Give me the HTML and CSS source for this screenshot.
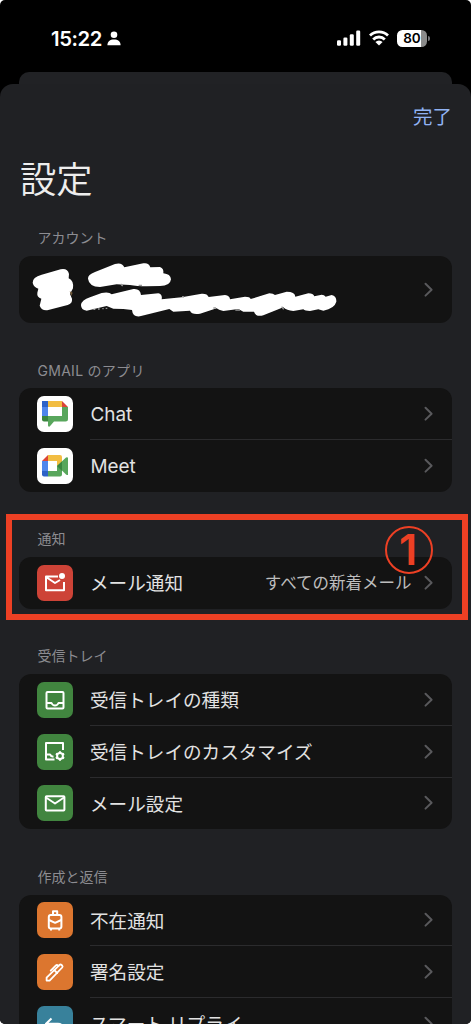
FILE: index.html
```html
<!DOCTYPE html>
<html lang="ja">
<head>
<meta charset="utf-8">
<title>設定</title>
<link rel="stylesheet" href="styles.css">
</head>
<body>
<svg class="defs" aria-hidden="true">
  <symbol id="chev" viewBox="0 0 10 16"><path d="M1.500 1.800 7.600 7.700 1.500 13.600" fill="none" stroke="#59595c" stroke-width="2" stroke-linecap="round" stroke-linejoin="round"/></symbol>
</svg>
<div class="phone">
  <header class="status">
    <span class="clock">15:22</span>
    <svg class="person" viewBox="0 0 14 15"><circle cx="7" cy="3.800" r="3.300"/><path d="M.4 14.300C.4 10.600 3 8.600 7 8.600s6.600 2 6.600 5.700z"/></svg>
    <svg class="signal" viewBox="0 0 24 16"><rect x="0" y="10.200" width="4" height="5.500" rx="1.200"/><rect x="6.400" y="7.500" width="4" height="8.200" rx="1.200"/><rect x="12.800" y="4.200" width="4" height="11.500" rx="1.200"/><rect x="19.200" y=".5" width="4" height="15.200" rx="1.200"/></svg>
    <svg class="wifi" viewBox="0 0 20 16"><g fill="none" stroke="#fff" stroke-width="2.800"><path d="M1 5.400a13 13 0 0 1 18 0"/><path d="M4.200 9.400a8.200 8.200 0 0 1 11.600 0"/></g><path d="M10 15.400 6.400 12a5 5 0 0 1 7.200 0z"/></svg>
    <div class="battery"><span>80</span></div>
  </header>
  <div class="back-sheet"></div>
  <main class="sheet">
    <div class="done">完了</div>
    <h1>設定</h1>

    <section>
      <h2>アカウント</h2>
      <div class="card">
        <div class="account">
          <svg class="redacted" viewBox="19 256 330 67"><g transform="translate(0 140) scale(.33333)">
            <path d="M98 428Q97 412 125 404L182 388Q203 384 207 402L206 415Q222 422 219 445L210 462L216 476Q218 490 203 495L145 510Q126 514 119 497L124 476Q110 472 112 458L115 446Q101 442 98 428Z"/>
            <path d="M264 416Q263 404 285 396L345 372Q366 366 373 382L430 370Q446 367 451 382L480 381Q492 385 490 400Q512 402 513 418Q511 438 480 438L440 439Q410 439 390 435L350 433L300 441Q267 440 264 416Z"/>
            <path d="M243 495Q245 480 270 472L305 459Q328 455 335 463L400 447Q421 445 423 465L475 460Q488 463 485 478L545 472L605 461Q622 460 626 471L675 465Q690 467 690 478L735 470Q750 470 752 477L808 460Q820 460 825 465L860 455Q885 455 886 470L925 460Q940 460 943 469L965 464Q973 464 977 470L995 465Q1010 468 1009 485Q1004 505 970 512L955 508L930 513Q915 513 910 508L880 513Q860 512 850 502L790 526Q768 532 762 515L730 515L715 507L670 513Q655 510 650 505L600 521Q575 525 570 512L520 515L508 507L420 529Q398 532 396 510L370 507L340 506L320 498L260 512Q243 510 243 495Z"/>
            <path class="trace" d="M280 508h6m8-1h5m8-1h4m6-1h5M362 432l6 6m48-2h10M546 470l6 1M640 504h8M706 510h14M845 500l6 8"/>
            <path d="M209 454l9 4-4 10z" fill="#755c3a"/>
          </g></svg>
          <svg class="chev"><use href="#chev"/></svg>
        </div>
      </div>
    </section>

    <section>
      <h2 class="spaced">GMAIL のアプリ</h2>
      <div class="card">
        <div class="row">
          <svg class="icon white" viewBox="0 0 36 36"><path fill="#4f86ec" d="M5 5h6v16H5z"/><path fill="#2d62c8" d="M5 5h6v6H5z"/><path fill="#f2bd42" d="M11 5h14v6H11z"/><path fill="#db4437" d="M25 5l6 6h-6z"/><path fill="#58a65c" d="M25 11h6v12q0 2.500-2.500 2.500H17l-4.300 5q-1.700.5-1.700-1V20h14z"/><path fill="#3b8540" d="M5 20h6v5.500H7q-2 0-2-2z"/></svg>
          <div class="line"><span class="latin">Chat</span><svg class="chev"><use href="#chev"/></svg></div>
        </div>
        <div class="row">
          <svg class="icon white" viewBox="0 0 36 36"><path fill="#db4437" d="M5 13l6-6v6z"/><path fill="#4f86ec" d="M5 13h6v10H5z"/><path fill="#2d62c8" d="M5 23h6v5.500H7q-2 0-2-2z"/><path fill="#f2bd42" d="M11 7h12q2 0 2 2v9h-5v-5h-9z"/><path fill="#58a65c" d="M11 23h9v-5l9-8.500q2-1 2 1v16q0 1-2 0l-4-4v4q0 2-2 2H11z"/><path fill="#3b8540" d="M20 18l5-4.500v9.500z"/></svg>
          <div class="line"><span class="latin">Meet</span><svg class="chev"><use href="#chev"/></svg></div>
        </div>
      </div>
    </section>

    <section class="marked">
      <h2>通知</h2>
      <div class="card">
        <div class="row">
          <svg class="icon red" viewBox="0 0 36 36"><path d="M21 11.500H9v13.800h18V17M9 12l9 6 5-3"/><circle cx="25" cy="11" r="3" class="solid"/></svg>
          <div class="line"><span>メール通知</span><span class="value">すべての新着メール</span><svg class="chev"><use href="#chev"/></svg></div>
        </div>
      </div>
      <div class="frame"></div>
      <div class="badge">1</div>
    </section>

    <section>
      <h2>受信トレイ</h2>
      <div class="card">
        <div class="row">
          <svg class="icon green" viewBox="0 0 36 36"><rect x="9.500" y="10" width="17" height="16.500" rx="1"/><path d="M10 21h4.500q1 2.500 3.500 2.500t3.500-2.500H26"/></svg>
          <div class="line"><span>受信トレイの種類</span><svg class="chev"><use href="#chev"/></svg></div>
        </div>
        <div class="row">
          <svg class="icon green" viewBox="0 0 36 36"><path d="M26 16V9H9v16.500h8.500M9 20.500h4q1 2 3.500 2.200"/><circle cx="23" cy="22" r="2.900"/><path d="M23 17.200v2M23 24.800v2M18.900 19.600l1.600 1M25.500 23.400l1.600 1M18.900 24.400l1.600-1M25.500 20.600l1.600-1"/></svg>
          <div class="line"><span>受信トレイのカスタマイズ</span><svg class="chev"><use href="#chev"/></svg></div>
        </div>
        <div class="row">
          <svg class="icon green" viewBox="0 0 36 36"><rect x="8.800" y="11.200" width="18.600" height="14.300" rx=".8"/><path d="M9 12.500l9 6 9-6"/></svg>
          <div class="line"><span>メール設定</span><svg class="chev"><use href="#chev"/></svg></div>
        </div>
      </div>
    </section>

    <section>
      <h2>作成と返信</h2>
      <div class="card">
        <div class="row">
          <svg class="icon orange" viewBox="0 0 36 36"><rect x="11.800" y="13" width="12.600" height="13.600" rx="2"/><path d="M16 13V9.300h4.200V13M12 18l6.100 2.800 6.100-2.800M14 27v1.500M22.200 27v1.500"/></svg>
          <div class="line"><span>不在通知</span><svg class="chev"><use href="#chev"/></svg></div>
        </div>
        <div class="row">
          <svg class="icon orange" viewBox="0 0 36 36"><g stroke-width="1.800"><path d="M9.600 26.600v-3L22.600 10.800q1-.8 2 .2l.6.600q.8.900 0 1.900L12.600 26.600z"/><path d="M13.700 16.600l5.200-5.200q1-.9 2 0l.6.600M17.300 16.200l2.800 2.800" stroke-linecap="round"/></g></svg>
          <div class="line"><span>署名設定</span><svg class="chev"><use href="#chev"/></svg></div>
        </div>
        <div class="row">
          <svg class="icon teal" viewBox="0 0 36 36"><path d="M14.500 12.500 9 17.800l5.500 5.200M9 17.800h12q5 0 5 6"/></svg>
          <div class="line"><span>スマート リプライ</span><svg class="chev"><use href="#chev"/></svg></div>
        </div>
      </div>
    </section>
  </main>
</div>
</body>
</html>
```
FILE: styles.css
```css
* { box-sizing: border-box; }
body {
  margin: 0;
  background: #fff;
  overflow: hidden;
  font-family: "Noto Sans CJK JP", sans-serif;
  color: #e2e2e2;
}
.defs { display: none; }
.phone {
  height: 1024px;
  overflow: hidden;
  background: #000;
  border-radius: 5px;
}
.status {
  height: 72px;
  display: flex;
  align-items: center;
  padding: 4px 41px 0 51px;
  fill: #fff;
}
.clock {
  font: 600 20.300px/24px Inter, sans-serif;
  color: #fff;
  width: 56px;
  padding-top: 1px;
  letter-spacing: -.4px;
}
.person { width: 14px; height: 15px; }
.signal { width: 24px; height: 16px; margin-left: auto; }
.wifi { width: 20px; height: 16px; margin: 0 8px; }
.battery {
  position: relative;
  width: 30px;
  height: 17px;
  border-radius: 5.500px;
  background: linear-gradient(90deg, #fff 80%, #8b8b8b 80%);
  font: 600 13.500px/17px Inter, sans-serif;
  color: #000;
  text-align: center;
  margin-right: 3px;
}
.battery::after {
  content: "";
  position: absolute;
  left: 31px;
  top: 6px;
  width: 2px;
  height: 5px;
  border-radius: 0 2px 2px 0;
  background: #77777a;
}
.back-sheet {
  height: 24px;
  margin: 0 19px -12px;
  border-radius: 10px 10px 0 0;
  background: #212225;
}
.sheet {
  height: 940px;
  padding: 17px 19px 0;
  border-radius: 13px 13px 0 0;
  background: #202124;
  overflow: hidden;
}
.done {
  height: 30px;
  font-size: 19.500px;
  line-height: 30px;
  color: #91b3f3;
  text-align: right;
}
h1 {
  margin: 21px 0 1px 1px;
  font-size: 36.300px;
  line-height: 50px;
  font-weight: 350;
  color: #eee;
}
h2 {
  margin: 0;
  height: 65.250px;
  padding: 35.500px 0 0 18.500px;
  font: 400 14px/24px Inter, "Noto Sans CJK JP", sans-serif;
  color: #8c8c91;
}
.spaced { letter-spacing: .28px; }
section:first-of-type h2 { height: 53px; padding-top: 23px; }
.card {
  border-radius: 12px;
  background: #131313;
  overflow: hidden;
}
.account {
  height: 67px;
  display: flex;
  align-items: center;
  justify-content: space-between;
  padding-right: 18px;
}
.redacted { width: 330px; height: 67px; fill: #fff; }
.trace { fill: none; stroke: #999; stroke-width: 4; }
.chev { width: 10px; height: 16px; flex: none; }
.row {
  height: 51.750px;
  display: flex;
  align-items: center;
  padding-left: 18px;
}
.icon {
  width: 36px;
  height: 36px;
  flex: none;
  border-radius: 7px;
  fill: none;
  stroke: #fff;
  stroke-width: 2;
  stroke-linejoin: round;
}
.icon .solid { fill: #fff; stroke: none; }
.white { background: #fff; stroke: none; }
.red { background: #cd4337; }
.green { background: #41853f; }
.orange { background: #dc762f; }
.teal { background: #38819b; }
.line {
  flex: 1;
  height: 100%;
  margin-left: 17px;
  padding-right: 18px;
  display: flex;
  align-items: center;
  justify-content: space-between;
  font-size: 18.600px;
  line-height: 26px;
}
.line span { padding-bottom: 1.500px; }
.row + .row .line { box-shadow: 0 -1px #2b2b2d; }
.line .latin { font-family: Inter, sans-serif; font-size: 18.900px; padding: 1.500px 0 0 .5px; }
.line .value {
  margin-left: auto;
  margin-right: 12.500px;
  font-size: 16.500px;
  color: #bdbdbd;
}
.marked { position: relative; }
.frame {
  position: absolute;
  left: -13px;
  right: -16px;
  top: 22.500px;
  bottom: -11.500px;
  border: 6px solid #ed4024;
}
.badge {
  position: absolute;
  left: 366px;
  top: 34px;
  width: 48px;
  height: 48px;
  border: 2px solid #ed4024;
  border-radius: 50%;
  font: 600 43px/43px Inter, sans-serif;
  color: #ed4024;
  text-align: center;
  text-indent: -2px;
}
```
